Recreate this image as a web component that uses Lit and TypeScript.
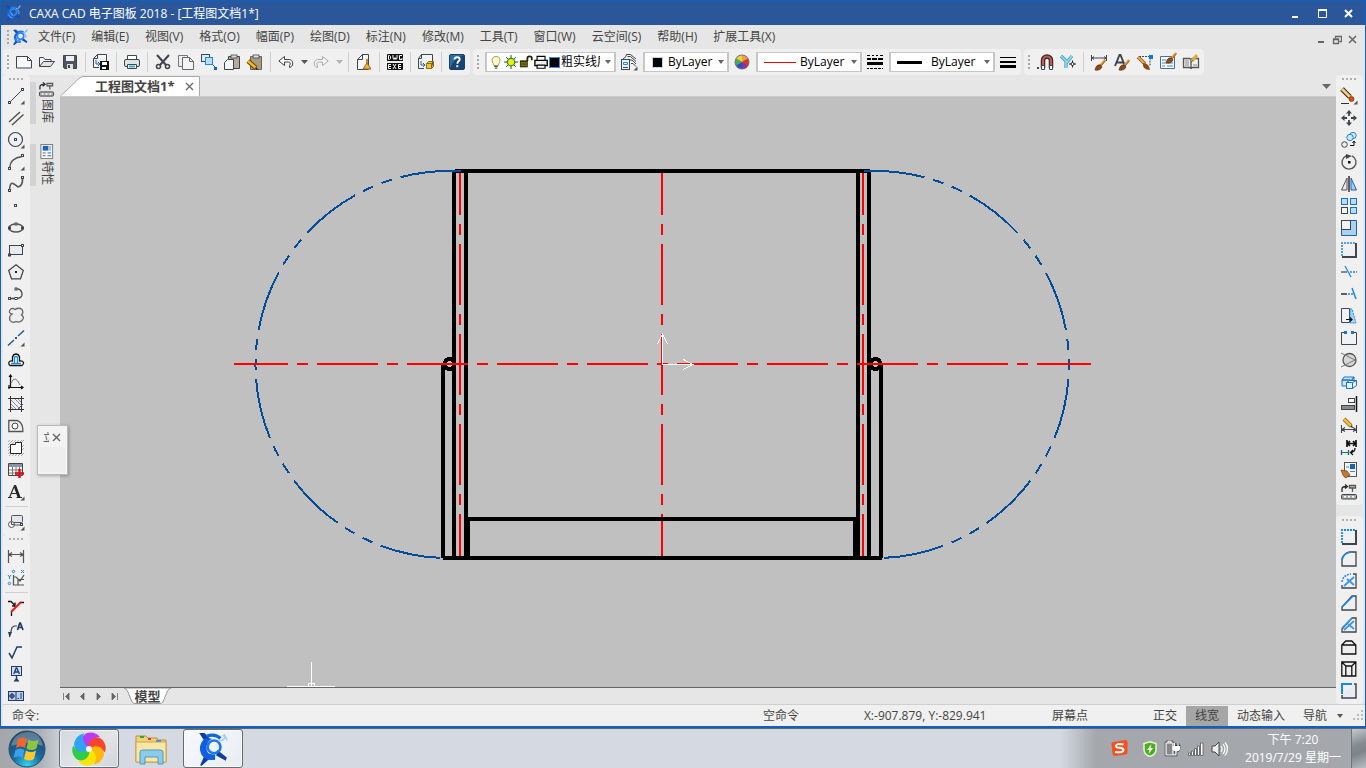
import { LitElement, html, svg, css } from "lit";
import { customElement, property } from "lit/decorators.js";

const D = "#3f454d";
const B = "#1e86e4";
const N = "#1f3a68";

/* small square handle centred on a point */
const h = (x: number, y: number) =>
  svg`<rect x=${x - 1} y=${y - 1} width="2" height="2" fill="#fff" stroke=${D}/>`;
const more = svg`<path d="M16.5 12.500v4h-4z" fill="#555"/>`;
const brush = (x: number, y: number) => svg`<g transform=${`translate(${x} ${y})`}>
  <path d="M10 0 5 6" stroke="#e89a3c" stroke-width="2.400"/><path d="M10.500.500 7 5" stroke="#6b4a20" stroke-width=".8"/>
  <path d="M6 5Q1 4 0 10q5 1 7-3z" fill="#8a4a1c" stroke="#5a2d0c" stroke-width=".6"/></g>`;
const edgeBox = svg`<rect x="1" y="1" width="14" height="14" fill="#eef0f4"/><path d="M15 1v14H1" fill="none" stroke=${D} stroke-width="2"/>`;

const ICONS: Record<string, unknown> = {
  new: svg`<path d="M.5 2.500h11l4 4v7.500H.5z" fill="#f6f8fb" stroke=${D}/><path d="M11.500 2.500v4h4" fill="none" stroke=${D}/>`,
  open: svg`<path d="M.5 12.500v-9h4l1.500 2h6v2" fill="#f4f5f8" stroke=${D}/><path d="m.5 12.500 4-5h11l-4 5z" fill="#dfe3ea" stroke=${D}/>`,
  save: svg`<path d="M1.500 1.500h13v13h-12l-1-1z" fill="#4f565f" stroke=${D}/><rect x="4" y="2" width="8" height="5" fill="#eef1f5"/><rect x="5" y="10" width="6" height="5" fill="#dfe3e8"/><rect x="6" y="11" width="2" height="3" fill=${D}/>`,
  export: svg`<path d="M4.500.5h9v8M6 13.500H.5v-9l4-4v4h-4" fill="#f4f6fa" stroke=${D}/><path d="M3 6v4h4M5 8l2 2-2 2" stroke="#1b62b0" fill="none"/><rect x="7" y="7" width="9" height="9" fill="#111"/><rect x="9" y="8" width="5" height="3" fill="#fff"/><rect x="9" y="13" width="4" height="2" fill="#fff"/>`,
  print: svg`<path d="M3.500 6V1.500h9V6" fill="#fff" stroke=${D}/><rect x=".5" y="5.500" width="15" height="7" rx="1.500" fill="#dfe2e6" stroke=${D}/><path d="M3.500 10.500h9v4h-9z" fill="#fff" stroke=${D}/><path d="M5 12.500h6" stroke="#2ab0d8" stroke-width="2"/>`,
  cut: svg`<path d="m2 1 9 10M14 1 5 11" stroke=${D} stroke-width="2"/><circle cx="3.500" cy="12.500" r="2" fill="none" stroke=${D} stroke-width="1.600"/><circle cx="12.500" cy="12.500" r="2" fill="none" stroke=${D} stroke-width="1.600"/>`,
  copy: svg`<path d="M4 12.500H.5V1.500h9v2" fill="#eee" stroke="#777"/><path d="M4.500 3.500h7l4 4v8h-11z" fill="#f2f3f5" stroke="#666"/><path d="M11.500 3.500v4h4" fill="none" stroke="#666"/>`,
  copyBase: svg`<rect x=".5" y=".5" width="8" height="7" fill="#dceafa" stroke=${D}/><rect x="4.500" y="3.500" width="7" height="7" fill="#b9dcfa" stroke=${B}/><path d="m11 10 3 3" stroke="#1b62b0"/><rect x="13" y="13" width="3" height="3" fill="#1463b8"/>`,
  paste: svg`<path d="M4.500 2.500h11v12h-11z" fill="#b7ab97" stroke=${D}/><rect x="7" y="1" width="6" height="3" fill="#d9d9d9" stroke=${D} stroke-width=".8"/><path d="M3.500 5.500h6v10h-9v-7z" fill="#f4f5f7" stroke=${D}/>`,
  pasteEdit: svg`<path d="M3.500 2.500h11v13h-11z" fill="#a89c86" stroke="#6b6250"/><rect x="6" y="1" width="6" height="3" fill="#ddd" stroke=${D} stroke-width=".8"/><path d="m1 7 8 7" stroke="#5a4208" stroke-width="4.500"/><path d="m1 7 8 7" stroke="#f8b81d" stroke-width="2.600"/><path d="m8.500 13.500 2 2" stroke="#222" stroke-width="1.500"/>`,
  undo: svg`<path d="M6.500 2.500v3h5q4 1 3 5.500-.500 2-3 2.500v-2q2-3-1-3.500h-4v3.500L.8 7z" fill="#fafafa" stroke=${D}/>`,
  redo: svg`<path d="M9.500 2.500v3h-5q-4 1-3 5.500.500 2 3 2.500v-2q-2-3 1-3.500h4v3.500L15.200 7z" fill="#f6f6f6" stroke="#aaa"/>`,
  clean: svg`<path d="M1.500 15.500v-10l5-5h6v15z" fill="#f4f6fa" stroke=${D}/><path d="M6.500.5v5h-5" fill="none" stroke=${D}/><path d="M11 5v4" stroke="#c8852a" stroke-width="2"/><path d="m11 9 4 6H7z" fill="#f2b632" stroke="#9a641b"/>`,
  dwg: svg`<rect y="0" width="16" height="16" rx="1" fill="#111"/><path d="M0 8h16" stroke="#eee" stroke-width="2"/><path d="M1.500 1.500v4h1l1-1v-2l-1-1zM6 1v3l1 1.500 1-2 1 2L10 4V1M15 1.500h-2.500v4H15V4M4 10.500H1.500v4H4M1.500 12.500H4M6 10l3 5M9 10l-3 5M14 10.500h-2.500v4H14M11.500 12.500H14" fill="none" stroke="#fff"/>`,
  block: svg`<path d="M3.500.5h11v13M6 14.500H.5v-10l3-4v4h-3" fill="#f4f6fa" stroke=${D}/><path d="M3 7v4h4M5 9l2 2-2 2" stroke="#1b62b0" fill="none"/><path d="M8.500 9.500h5v5h-5zM8.500 9.500l2-2h5l-2 2M13.500 14.500l2-2v-5" fill="#f2c230" stroke="#8a6a12"/>`,
  help: svg`<rect x=".5" y=".5" width="15" height="15" rx="1.500" fill="#2a6ca8" stroke="#1b3f66"/><path d="M1 15Q4 4 15 1v14z" fill="#174472"/><path d="M5.500 5.500q.3-2.300 2.700-2.300 2.500 0 2.500 2.100 0 1.400-1.300 2.100-1 .6-1 2.300" fill="none" stroke="#fff" stroke-width="1.900"/><rect x="7.300" y="11.200" width="2" height="2" fill="#fff"/>`,
  layers: svg`<path d="M2 5 5 2.500 5.500.5H9.500L15 5M6.500 2.500h3l5.500 5M9 6h2l4 4M10 9.500h2l3 3" fill="none" stroke=${D}/><rect x=".5" y="5.500" width="8" height="10" fill="#eef4fb" stroke=${D}/><path d="M2.500 8.500h4v2h-4z" fill="none" stroke=${B}/><path d="M2 13.500h5" stroke=${D}/>${more}`,
  wheel: svg`<circle cx="8" cy="8" r="7.500" fill="#777"/><path d="M8 8V1.500A6.500 6.500 0 0 1 13.600 4.800z" fill="#f0a040"/><path d="M8 8 2.400 4.800A6.500 6.500 0 0 1 8 1.500z" fill="#e8d040"/><path d="M8 8 13.600 4.800A6.500 6.500 0 0 1 13.600 11.200z" fill="#e03030"/><path d="M8 8 13.600 11.200A6.500 6.500 0 0 1 8 14.500z" fill="#8a30a0"/><path d="M8 8v6.500A6.500 6.500 0 0 1 2.400 11.200z" fill="#2a50c8"/><path d="M8 8 2.400 11.200A6.500 6.500 0 0 1 2.400 4.800z" fill="#40b050"/>`,
  ltype: svg`<path d="M0 1.500h3m2 0h2m2 0h2m2 0h3" stroke="#000"/><path d="M0 5h4m1 0h5m1 0h5" stroke="#000" stroke-width="2"/><path d="M0 9.500h16" stroke="#000" stroke-width="3"/><path d="M0 14.500h2m1 0h3m1 0h3m1 0h3m1 0h1" stroke="#000"/>`,
  lweight: svg`<path d="M0 3.500h16" stroke="#000"/><path d="M0 8h16" stroke="#000" stroke-width="2"/><path d="M0 12.500h16" stroke="#000" stroke-width="3"/>`,
  magnet: svg`<path d="M6 14V6.500a4 4 0 0 1 8 0V14" fill="none" stroke="#4a1c1c" stroke-width="4.500"/><path d="M6 11V6.500a4 4 0 0 1 8 0V11" fill="none" stroke="#b06460" stroke-width="2.200"/><path d="M4.500 11.500h3v4h-3zM12.500 11.500h3v4h-3z" fill="#f3f3f3" stroke=${D}/><rect x="0" y="13" width="2" height="2" fill=${D}/>`,
  snapY: svg`<path d="m1 2 6 6 5-6M6 7v7" fill="none" stroke="#4aa6cc" stroke-width="3.400"/><path d="m1 2 6 6 5-6M6 7v7" fill="none" stroke="#9bd8ee" stroke-width="1.500"/><path d="M9 10h7M12.500 6.500v7" stroke="#222"/><circle cx="12.500" cy="10" r="1.500" fill="#fff" stroke="#222"/>`,
  dimBrush: svg`<path d="M.5 1v6M15.500 1v6M1 4h14M3 2.500 1 4l2 1.500M13 2.500 15 4l-2 1.500" stroke=${D} fill="none"/>${brush(4, 6)}`,
  textBrush: svg`<path d="m1 12 4.500-11h1L11 12M3 8.500h6" fill="none" stroke=${D} stroke-width="1.900"/>${brush(5, 6)}`,
  lineBrush: svg`<path d="M2 2.500h11v10" stroke=${D} fill="none" stroke-dasharray="2 1"/><rect x="12" y="1" width="4" height="4" fill="#0a78e0"/><path d="m1 3 7 7" stroke="#6b4a20" stroke-width="3.400"/><path d="m1 3 7 7" stroke="#f0a84c" stroke-width="2.200"/><path d="M6 9q6 0 7 7-8 0-7-7z" fill="#8a4a1c"/>`,
  tblBrush: svg`<path d="M.5 2.500h14v12H.5z" fill="#f5f8fc" stroke="#4a7098"/><path d="M2 6h4M2 9h5M2 12h3M8 9h5M7 12h6" stroke="#4a88c8"/>${brush(6, -1)}`,
  bookBrush: svg`<path d="M.5 4.500h6l1.500 1 1.500-1h6v9h-6l-1.500 1-1.500-1h-6zM8 5.500v9" fill="#eee" stroke="#555" stroke-width="1.300"/><path d="M2 7h4M2 9h4M2 11h4M10 11h4" stroke="#888"/><path d="m14 1-5 6" stroke="#e0a83c" stroke-width="3"/><path d="m8 8.500 1.500-2" stroke="#555"/>`,

  line: svg`<path d="M2 14 14 2" stroke=${D}/>${h(1.5, 14.5)}${h(14.5, 1.5)}${more}`,
  parallel: svg`<path d="M1 12 12 2M4 15 15.500 4.500" stroke="#44503f" stroke-width="1.300"/>`,
  circle: svg`<circle cx="7.500" cy="7.500" r="7" fill="#eef1f5" stroke=${D} stroke-width="1.200"/>${h(7.5, 7.5)}${more}`,
  arc: svg`<path d="M1.500 14Q2.500 4 14 2.500" fill="none" stroke="#555" stroke-width="1.400"/>${h(1.5, 14.5)}${h(14.5, 1.5)}${more}`,
  spline: svg`<path d="M1.500 14Q2 6 5 7.500T10 11q5-1 4.500-9" fill="none" stroke="#555" stroke-width="1.600"/>${h(1.5, 14.5)}${h(14.5, 1.5)}`,
  point: svg`${h(7.5, 7.5)}`,
  ellipse: svg`<ellipse cx="8" cy="8" rx="7" ry="4" fill="#eceef2" stroke="#555" stroke-width="1.500"/>${h(1.5, 8)}${h(14.5, 8)}${h(8, 4)}`,
  rect: svg`<rect x="1.500" y="3.500" width="13" height="9" fill="#e8ebf2" stroke=${D}/>${h(1.5, 13)}${h(14.5, 3.5)}`,
  pentagon: svg`<path d="m8 .8 7.300 5.700-2.800 8.300h-9L.7 6.500z" fill="#eceef4" stroke="#444" stroke-width="1.200"/><rect x="7" y="7" width="2" height="2" fill="#222"/>`,
  pline: svg`<path d="M2 12.500h7q6-1 5-5-1-5-6-4.500" fill="none" stroke="#444" stroke-width="1.300"/>${h(1.5, 12.5)}${h(8, 12.5)}${h(8, 3)}`,
  cloud: svg`<path d="M4 6Q0 5 2 2t5-.5q4-2.500 7 0 2 3-.5 5.500Q17 9 14 12.500q-3 2.500-6 1-4 2-6-1-1.500-4 2-6.500z" fill="#eceef2" stroke="#666" stroke-width="1.300"/>`,
  cline: svg`<path d="M0 15.500 6 10M10 6l6-5.500" stroke="#215a94" stroke-width="1.500"/><rect x="7" y="7" width="2" height="2" fill="#1d5796"/>${more}`,
  offset: svg`<path d="M2 13.500h12q2-1 1.500-3-1-2-4-1.500V5q-1-3-3.500-3T4.500 5v4Q1 8.500.8 11q0 2 1.200 2.500z" fill="#fff" stroke="#111" stroke-width="1.300"/><path d="M3 11.500h10M3 11.500h3.500V5.500q1.500-2 3 0v6" fill="none" stroke=${B} stroke-width="1.300"/>`,
  func: svg`<path d="M2.500 1v13M0 13.500h15M1 3l1.500-2L4 3M1 11v4M13 12l2 1.500L13 15" fill="none" stroke="#111" stroke-width="1.200"/><path d="M3 9q4-9 9 2" fill="none" stroke="#777"/>`,
  hatch: svg`<path d="M2.500 0v16M13.500 0v16M0 2.500h16M0 13.500h16" stroke="#333"/><path d="m3 4 9 9M3 8l5 5M7 3l6 6M3 11l2 2M10 3l3 3" stroke="#8a8ab0"/><path d="m9 14 6-6" stroke="#555"/>`,
  region: svg`<path d="M.8 2.500h8q5 1 6 8v3h-14z" fill="#eef0f4" stroke="#555" stroke-width="1.300"/><circle cx="7" cy="8" r="3" fill="#fff" stroke=${D}/>`,
  fill: svg`<path d="m0 2 2-2M0 5l5-5M0 8l8-8M0 11 11 0M0 14 14 0M1 16l3-3M4 16l2-2M7 16l2-2M10 16l3-3M13 16l3-3M12 4l4-4M13 8l3-3M13 11l3-3" stroke="#aaa"/><path d="M2.500 4.500h5v-2h6v11h-11z" fill="#fff" stroke="#222"/>`,
  table: svg`<path d="M.5 1.500h14v12H.5z" fill="#fff" stroke="#444"/><rect x="1" y="2" width="13" height="3" fill="#8a93a5"/><path d="M1 8h13M1 11h13M4.500 5v8M8 5v8M11.500 5v8" stroke="#777"/><path d="M11.500 7v9M7 11.500h9" stroke="#d8101c" stroke-width="2.400"/>`,
  text: svg`<path d="m1.500 13.500 5-12h1l4.500 12M0 13.500h4M8.500 13.500H14M3.500 9.500h6" fill="none" stroke="#2a2a2a" stroke-width="1.200"/><path d="m7 2.500 4 11" stroke="#222" stroke-width="2.400"/>${more}`,
  insert: svg`<rect x="3.500" y="1.500" width="11" height="7" rx="1" fill="#e3e6ec" stroke="#555"/><circle cx="3.500" cy="10.500" r="3" fill="#f5f5f5" stroke="#555"/><path d="M3.500 8v2.500H6M6 11h8" stroke="#555" fill="none"/>${h(13.5, 10.5)}${more}`,
  dim: svg`<path d="M.5 2v13M15.500 2v13M1 6.500h14M4 4.500l-3 2 3 2M12 4.500l3 2-3 2" fill="none" stroke="#555" stroke-width="1.200"/>`,
  coord: svg`<path d="M5.500 5v10H16M5 7h3l4 4 4-6M10 15V9.500h6" fill="none" stroke="#555" stroke-width="1.200"/><path d="m13 0 3 3M16 0l-3 3M0 5l1.500 2L3 5M1.500 7v2" stroke=${B} fill="none"/><circle cx="5.500" cy="1.500" r="1.200" fill="none" stroke=${B}/><circle cx="1.500" cy="13.500" r="1.200" fill="none" stroke=${B}/>`,
  chamferDim: svg`<path d="M0 1.500h3l4 4M7 2.500v3.500H4M12 2.500h4M3.500 12v4" fill="none" stroke="#111" stroke-width="1.300"/><path d="M13 2 3 12" stroke="#f01414" stroke-width="2"/>`,
  leader: svg`<path d="M1.500 15 4 5.500 6 4h3" fill="none" stroke=${D} stroke-width="1.200"/><path d="M0 10h4l-2.500 5z" fill=${N}/><path d="m9.500 8 2.300-7h.6L15 8M10.500 5.500h3.500" fill="none" stroke=${N} stroke-width="1.700"/>`,
  rough: svg`<path d="m1 9 3 5 5-11h5" fill="none" stroke=${N} stroke-width="1.500"/>`,
  datum: svg`<rect x="3.500" y=".5" width="10" height="9" fill="#cfe0f4" stroke=${N}/><path d="m5.800 8 2.400-6h.6L11.500 8M6.600 6h4M8.500 10v3" fill="none" stroke=${N} stroke-width="1.300"/><path d="m8.500 11.500 3 4h-6z" fill=${N}/>`,
  tol: svg`<rect x=".5" y="3.500" width="15" height="9" fill="#b9cfe8" stroke=${N}/><circle cx="4" cy="8" r="2" fill="none" stroke=${N}/><path d="M1 8h6M4 5v6M8 4v8M13 5v6M9.500 10.500H11" stroke=${N}/>`,

  erase: svg`<path d="m1 1 8 8" stroke="#3a2a10" stroke-width="5"/><path d="m1 1 8 8" stroke="#e8cc90" stroke-width="3"/><path d="m1 3 7 7" stroke="#a07428"/><circle cx="10.500" cy="11" r="2.500" fill="#d8501c" stroke="#7a2a0c" stroke-width=".7"/><path d="M0 15.500h8" stroke="#333"/>${more}`,
  move: svg`<path d="M8 2v4M8 10v4M2 8h4M10 8h4" stroke=${D} stroke-width="1.800"/><path d="M8 0l3 3.500H5zM8 16l3-3.500H5zM0 8l3.500-3v6zM16 8l-3.500-3v6z" fill=${D}/>`,
  copyTo: svg`<circle cx="3.500" cy="12.500" r="2.800" fill="#eee" stroke=${D}/><circle cx="12" cy="3.500" r="3.200" fill="#d5e8fa" stroke=${B}/><circle cx="9" cy="5.500" r="3.200" fill="#d5e8fa" stroke=${B}/><path d="M9 13.500h4v-4M11.500 11l1.500-2 1.500 2" fill="none" stroke="#111"/>`,
  rotate: svg`<path d="M5 1.800A7 7 0 1 0 11 1.800" fill="none" stroke="#555" stroke-width="1.400"/><path d="m5 0 6 2-6 3z" fill="#444"/><rect x="7" y="7" width="2.500" height="2.500" fill="#111"/>`,
  mirror: svg`<path d="M6 2v12H.5z" fill="#e6e9ee" stroke="#555"/><path d="M8 0v16" stroke="#111" stroke-width="1.300"/><path d="M10 2v12h5.500z" fill="#9fd0f5" stroke="#1b62b0"/>`,
  array: svg`<rect x=".5" y=".5" width="6" height="6" fill="#b9dcf8" stroke="#1b72c4"/><rect x="9.500" y=".5" width="6" height="6" fill="#b9dcf8" stroke="#1b72c4"/><rect x=".5" y="9.500" width="6" height="6" fill="#f3f3f3" stroke=${D}/><rect x="9.500" y="9.500" width="6" height="6" fill="#b9dcf8" stroke="#1b72c4"/>`,
  scale: svg`<path d="M.5.5h15v15H.5z" fill="#a9d2f2" stroke="#1b62b0"/><rect x=".5" y=".5" width="9" height="9" fill="#f0f2f5" stroke=${D}/>`,
  stretch: svg`${edgeBox}<path d="M1 14V1h13" fill="none" stroke=${B} stroke-dasharray="2 1" stroke-width="1.500"/>`,
  trim: svg`<path d="M0 8h6" stroke=${D} stroke-width="1.200"/><path d="m4 2 6 11" stroke=${B} stroke-width="1.300"/><path d="M9 8h7" stroke=${B} stroke-dasharray="2 1" stroke-width="1.300"/>`,
  extend: svg`<path d="M0 8h6" stroke="#111" stroke-width="1.300"/><path d="M7 8h5" stroke=${B} stroke-dasharray="2 1" stroke-width="1.300"/><path d="m11 2 4 11" stroke=${B} stroke-width="1.500"/>`,
  stretchTo: svg`<path d="M.5.5h8v14h-8z" fill="#f0f2f5" stroke=${D}/><path d="M9 1h2l4 14H9z" fill="#a9d2f2" stroke=${B} stroke-dasharray="2 1"/><path d="M5 11.500h6M9 9.500l2 2-2 2" stroke="#111" stroke-width="1.200" fill="none"/>`,
  breakAt: svg`<path d="M4 2.500H.5v12h15v-12H12" fill="#eef1f5" stroke=${D}/><rect x="3" y="1" width="3" height="3" fill="#1b72c4"/><rect x="10" y="1" width="3" height="3" fill="#1b72c4"/>`,
  zoomPart: svg`<circle cx="8.500" cy="8" r="6.500" fill="#d8d8d8" stroke="#555" stroke-width="1.300"/><path d="M0 1l14 7L0 15" fill="none" stroke="#777"/>`,
  blocks: svg`<path d="M3 3h10l-2 3H1zM1 6h8v6H1zM11 6l2-3v6l-2 3" fill="#cfe6fa" stroke="#1b72c4"/><path d="M5.500 8.500h6v6h-6zM5.500 8.500l3-2h7v5l-4 3M11.500 8.500l4-2" fill="#e4f2fd" stroke="#1b72c4"/>`,
  align: svg`<path d="M15.500 0v16" stroke="#111" stroke-width="1.500"/><rect x="7.500" y="2.500" width="6" height="4" fill="#fff" stroke=${D}/><rect x=".5" y="9.500" width="13" height="4" fill="#8a8a8a" stroke=${D}/>`,
  dimEdit: svg`<path d="M.5 7v8M15.500 7v8M1 11.500h14M4 9.500l-3 2 3 2M12 9.500l3 2-3 2" fill="none" stroke=${D} stroke-width="1.100"/><path d="m3 1 7 7" stroke="#8a5a10" stroke-width="4"/><path d="m3 1 7 7" stroke="#f4bc44" stroke-width="2.600"/><path d="m9 9 3 1-1-3" fill="#333"/>`,
  dimMatch: svg`<path d="M6 0v7M15 0v7M6 3.500h9M9 1 6.500 3.500 9 6M12 1l2.500 2.500L12 6" fill="none" stroke="#111" stroke-width="1.700"/><path d="M.5 10v5M7.500 10v5" stroke="#1e50c8" stroke-width="1.300"/><path d="M1 12.500h7" stroke="#1a8a3a"/><path d="M14 8q0 4-4 4.500M12 10l-2.500 2.500L12 15" stroke="#111" fill="none" stroke-width="1.300"/>`,
  props: svg`<rect x="3.500" y=".5" width="12" height="14" fill="#f2f5f9" stroke="#555"/><rect x="9" y="2" width="5" height="5" fill="#1b62b0"/><path d="M9 9.500h5M5 5h3" stroke="#4a88c8"/><path d="m0 8 6 1 3 4-4 3q-2-1-3-3z" fill="#c27a34" stroke="#6b3a10" stroke-width=".7"/>`,
  sheet: svg`<rect x="2" y=".5" width="12.500" height="15" fill="#f4f7fa" stroke="#777"/><rect x="4" y="2" width="6" height="5" fill="#1b62b0"/><rect x="10" y="2" width="3" height="5" fill="#9cc2ea"/><path d="M4 9.500h3m2 0h4M4 12.500h3m2 0h4" stroke="#4a6078"/>`,
  lib: svg`<path d="M1 8V5q0-2.500 4-2.500M4 .5l2.500 2L4 4.500" fill="none" stroke="#222" stroke-width="1.300"/><path d="M8.500 1.500h6v2.500h-6zM11.500 4v4" fill="#ccc" stroke="#555" stroke-width="1.300"/><rect x=".5" y="10.500" width="15" height="4.500" rx="1" fill="#aaa" stroke=${D}/><path d="M3 12.700h2m2 0h2m2 0h2" stroke="#fff" stroke-width="1.500"/>`,

  cornerA: svg`${edgeBox}<path d="M1 14V1h13" fill="none" stroke=${B} stroke-dasharray="2 1" stroke-width="1.800"/>`,
  fillet: svg`<path d="M1 15V8Q3 2 9 1h6v14z" fill="#eef0f4" stroke=${D} stroke-width="1.300"/><path d="M1 9Q2 2 10 1" fill="none" stroke=${B} stroke-width="1.600"/>`,
  filletM: svg`<path d="M1 12v3h14V1h-3" fill="#eef0f4" stroke=${D} stroke-width="1.300"/><path d="M1 9Q2 2 10 1" fill="none" stroke=${B} stroke-dasharray="2 1" stroke-width="1.500"/><path d="m3 13 10-9M6 6l7 6" stroke="#3a96e8" stroke-width="1.800"/>`,
  chamfer: svg`<path d="M1 12v3h14V1h-4z" fill="#eef0f4" stroke=${D} stroke-width="1.300"/><path d="M1 12 12 1" stroke=${B} stroke-width="1.700"/>`,
  chamferM: svg`<path d="M1 12v3h14V1h-4z" fill="#eef0f4" stroke=${D} stroke-width="1.300"/><path d="M1 11 11 1M3 13l10-9M7 7l6 5" stroke="#3a96e8" stroke-width="1.700"/>`,
  outer: svg`<path d="M.8 6v9h14V6l-4-4h-6zM.8 6h14" fill="#eee" stroke="#111" stroke-width="1.300"/>`,
  inner: svg`<path d="M.8 1h14v14H.8zM.8 1l4 4v10M14.800 1l-4 4v10M4.800 5h6" fill="#eee" stroke="#111" stroke-width="1.300"/>`,
  sharp: svg`<path d="M1 12v3h14V1h-2" fill="#e8ecf2" stroke=${D} stroke-width="1.500"/><path d="M1 11V1h10" fill="none" stroke=${B} stroke-width="2"/>`,

  bulb: svg`<path d="M5.500 12Q5.500 10 4 8.500 2.500 4 5 2.500 8 .5 11 2.500 13.500 4 12 8.500 10.500 10 10.500 12z" fill="#fdfbd0" stroke="#9a9640"/><path d="M6 13h4M6.500 15h3" stroke="#555" stroke-width="1.400"/>`,
  sun: svg`<path d="M8 0v16M0 8h16M2.500 2.500l11 11M13.500 2.500l-11 11" stroke="#222"/><circle cx="8" cy="8" r="4.200" fill="#f4f000" stroke="#1a9a2a" stroke-width="1.400"/>`,
  lock: svg`<rect x="1" y="6" width="9" height="8" fill="#3c3808"/><path d="M2 9h7M2 11.500h7" stroke="#a09820"/><path d="M9.500 7V3.500q0-2 2.500-2t2.500 2V6" fill="none" stroke="#222008" stroke-width="2"/>`,
  printB: svg`<path d="M3.500 6V1.500h9V6" fill="#fff" stroke="#000" stroke-width="1.300"/><path d="M1 6h14v6H1z" fill="#eee" stroke="#000" stroke-width="1.500"/><path d="M3.500 11.500h9v3.500h-9z" fill="#fff" stroke="#000" stroke-width="1.300"/>`,
};

const icon = (name: string) =>
  html`<svg class="ico" viewBox="0 0 17 17" aria-hidden="true" fill="none">${ICONS[name]}</svg>`;

const logo = html`<svg class="logo" viewBox="0 0 32 32" aria-hidden="true">
  <path d="m2 2 6-1 6 6-4 4zM21 17l10 8-2 3-10-6zM8 22l5 3-8 7-3-1z" fill="#0b4fc0"/>
  <path d="M9 7Q1 14 5 22q5 8 13 5l-1-4q-7 1-8-5-1-6 6-10z" fill="#1266dc"/>
  <path d="M10 5q9-4 15 1l-4 1q-5-2-9 1z" fill="#1f7cf0"/>
  <circle cx="17" cy="14" r="6.500" fill="none" stroke="#2b86ee" stroke-width="3.500"/>
  <path d="M26 5q5-1 4-4-1 8-8 6M25 9q4 3 3 9" fill="none" stroke="#6ab6fa" stroke-width="2"/>
  <path d="m12 15 3 4M7 19q2 6 8 7" fill="none" stroke="#7cc4ff" stroke-width="1.500"/></svg>`;

const bigLogo = html`<svg width="34" height="34" viewBox="0 0 32 32" aria-hidden="true">
  <path d="m3 1 5 0 5 5-4 4zM20 17l9 7-1 3-9-5zM8 22l5 3-8 7-1-1z" fill="#0b3fa0"/>
  <path d="M8 6Q1 13 5 21q4 7 13 5v-5q-8 1-8-5-1-6 5-10z" fill="#0f5fe0"/>
  <circle cx="17" cy="14" r="6" fill="none" stroke="#1d78ea" stroke-width="2.500"/>
  <path d="M25 3q4 1 4 5M27 2q1 7-6 6" fill="none" stroke="#a4cdf6" stroke-width="1.500"/>
  <path d="M10 4q8-3 13 2" fill="none" stroke="#1266dc" stroke-width="3"/></svg>`;

type Item = [string, string] | "|";
const FILE_TOOLS: (Item | "v" | "vd")[] = [
  ["new", "新建"], ["open", "打开"], ["save", "保存"], "|", ["export", "另存"], "|", ["print", "打印"], "|",
  ["cut", "剪切"], ["copy", "复制"], ["copyBase", "带基点复制"], ["paste", "粘贴"], ["pasteEdit", "选择性粘贴"], "|",
  ["undo", "撤销"], "v", ["redo", "重做"], "vd", "|", ["clean", "清理"], "|", ["dwg", "DWG 转换器"], "|",
  ["block", "块"], "|", ["help", "帮助"],
];
const STYLE_TOOLS: Item[] = [
  ["magnet", "捕捉"], ["snapY", "捕捉设置"], "|", ["dimBrush", "标注样式"], ["textBrush", "文字样式"],
  ["lineBrush", "引线样式"], ["tblBrush", "表格样式"], ["bookBrush", "样式管理"],
];
const DRAW: Item[] = [
  ["line", "直线"], ["parallel", "平行线"], ["circle", "圆"], ["arc", "圆弧"], ["spline", "样条"], ["point", "点"],
  ["ellipse", "椭圆"], ["rect", "矩形"], ["pentagon", "正多边形"], ["pline", "多段线"], ["cloud", "云线"],
  ["cline", "中心线"], ["offset", "等距线"], ["func", "公式曲线"], ["hatch", "剖面线"], ["region", "局部放大"],
  ["fill", "填充"], ["table", "表格"], ["text", "文字"], "|", ["insert", "块插入"],
];
const ANNOT: Item[] = [
  ["dim", "尺寸标注"], ["coord", "坐标标注"], "|", ["chamferDim", "倒角标注"], ["leader", "引出说明"],
  ["rough", "粗糙度"], ["datum", "基准代号"], ["tol", "形位公差"],
];
const MODIFY: Item[] = [
  ["erase", "删除"], ["move", "平移"], ["copyTo", "平移复制"], ["rotate", "旋转"], ["mirror", "镜像"],
  ["array", "阵列"], ["scale", "缩放"], ["stretch", "拉伸"], ["trim", "裁剪"], ["extend", "延伸"],
  ["stretchTo", "拉伸到"], ["breakAt", "打断"], ["zoomPart", "局部"], ["blocks", "分解"], ["align", "对齐"],
  ["dimEdit", "标注编辑"], ["dimMatch", "标注匹配"], ["props", "特性匹配"], ["lib", "图库"],
];
const CORNER: Item[] = [
  ["cornerA", "多圆角"], ["fillet", "圆角"], ["filletM", "多圆角"], ["chamfer", "倒角"], ["chamferM", "多倒角"],
  ["outer", "外倒角"], ["inner", "内倒角"], ["sharp", "尖角"],
];
const MENUS = ["文件(F)", "编辑(E)", "视图(V)", "格式(O)", "幅面(P)", "绘图(D)", "标注(N)", "修改(M)", "工具(T)",
  "窗口(W)", "云空间(S)", "帮助(H)", "扩展工具(X)"];

const tool = (it: Item | "v" | "vd") =>
  it === "|" ? html`<span class="sep"></span>`
  : it === "v" || it === "vd"
    ? html`<button class="drop ${it}" aria-label="更多"><svg width="7" height="4" viewBox="0 0 7 4"><path d="M0 0h7L3.500 4z" fill="currentColor"/></svg></button>`
    : html`<button class="tool" aria-label=${it[1]}>${icon(it[0])}</button>`;

const base = css`
  * { box-sizing: border-box; }
  button { border: 0; padding: 0; background: none; font: inherit; color: inherit; display: grid; place-items: center; }
  svg { display: block; }
  .ico { width: 17px; height: 17px; overflow: visible; }
  .tool { width: 23px; height: 22px; }
  .panel { background: #f0f0f0; border-radius: 4px; }
`;

@customElement("tool-rail")
class ToolRail extends LitElement {
  @property({ attribute: false }) items: Item[] = [];
  static styles = [base, css`
    :host { display: block; background: #f0f0f0; border-radius: 4px; padding-bottom: 2px; }
    .grip { height: 2px; width: 15px; margin: 3px 0 5px 6px;
      background: repeating-linear-gradient(90deg, #b0b0b0 0 2px, transparent 2px 4px); }
    .tool { width: 27px; }
    .sep { display: block; height: 1px; margin: 3px 2px 4px; background: #cfcfcf; }
  `];
  render() {
    return html`<div class="grip"></div>${this.items.map(tool)}`;
  }
}

@customElement("cad-drawing")
class CadDrawing extends LitElement {
  static styles = css`
    :host { display: block; min-height: 0; background: #c0c0c0; overflow: hidden; }
    svg { display: block; width: 100%; height: 100%; }
    .k { stroke: #000; stroke-width: 4; }
    .r { stroke: #f00; stroke-width: 2; stroke-dasharray: 61 9 11 9; }
    .b { stroke: #004c99; stroke-width: 2; stroke-dasharray: 61 9 11 9 11 9; }
    .w { stroke: #fff; stroke-width: 1; }
  `;
  render() {
    return html`<svg viewBox="60 97 1276 590" fill="none" shape-rendering="crispEdges" role="img" aria-label="图形">
      <path class="r" stroke-dashoffset="19" d="M662 173V556"/>
      <path class="k" d="M455 171H870M454 170V558M466 170V558M858 170V558M869 170V558M443 363V558M881 363V558M443 558H882M468 519H857M468 519V558M855 519V558"/>
      <circle cx="449.500" cy="364" r="5" stroke="#000" stroke-width="4"/>
      <circle cx="875.500" cy="364" r="5" stroke="#000" stroke-width="4"/>
      <path class="r" stroke-dashoffset="19" d="M460 173V556"/><path class="r" stroke-dashoffset="19" d="M863 173V556"/>
      <path class="b" d="M461 171H449A193.500 193.500 0 0 0 255.500 364.500A193.500 193.500 0 0 0 443 558"/>
      <path class="b" d="M864 171H875.500A193.500 193.500 0 0 1 1069 364.500A193.500 193.500 0 0 1 881 558"/>
      <path class="r" stroke-dashoffset="7" d="M234 364H1091"/>
      <path class="w" d="M662.500 335V364.500H693M657.500 344 662.500 334.500 667.500 344M683.500 359.500 692.500 364.500 683.500 369.500"/>
      <path class="w" d="M311.500 662V686M287 686.500H335M308.500 687V683.500H314.500V687"/>
    </svg>`;
  }
}

@customElement("app-root")
class AppRoot extends LitElement {
  static styles = [base, css`
    :host { display: flex; flex-direction: column; height: 100vh; overflow: hidden; color: #444;
      font: 12px/16px "Open Sans", "Noto Sans CJK SC", sans-serif; cursor: default; }
    .window { flex: 1; min-height: 0; display: flex; flex-direction: column; background: #e6e6e6;
      border: 1px solid #1060c0; border-bottom-width: 2px; }
    .title { height: 24px; display: flex; align-items: center; background: #2b579a; color: #fff; padding-left: 4px; flex: none; }
    .title h1 { font: inherit; margin: 0; flex: 1; padding-top: 1px; }
    .logo { width: 16px; height: 16px; margin-right: 8px; }
    .winbtn { width: 26px; height: 24px; }
    .winbtns { display: flex; padding-right: 3px; }
    .menu { height: 24px; display: flex; align-items: center; padding-left: 6px; flex: none; }
    .menu .logo { margin: 0 2px 0 3px; }
    .menu button { padding: 0 8px; height: 22px; }
    .vgrip { width: 2px; height: 14px; background: repeating-linear-gradient(#a8a8a8 0 2px, transparent 2px 4px); }
    .mdi { margin-left: auto; display: flex; color: #666; padding: 6px 4px 0 0; }
    .menu .mdi button { width: 16px; height: 16px; padding: 0; }
    .bars { display: flex; gap: 3px; height: 26px; flex: none; padding-left: 2px; }
    .bars .panel { display: flex; align-items: center; padding: 0 1px 0 4px; }
    .bars .vgrip { margin-right: 4px; }
    .bars .sep { width: 1px; height: 20px; margin: 0 4px 0 3px; background: #cfcfcf; }
    .bars .layerbar { gap: 2px; }
    .drop { width: 12px; height: 22px; color: #555; }
    .vd { color: #b4b4b4; }
    .combo { display: flex; align-items: center; height: 20px; background: #fff; border: 2px solid #c6c6c6;
      border-width: 1px 2px; color: #000; }
    .combo select { appearance: none; border: 0; background: none; font: inherit; color: inherit; padding: 0;
      min-width: 0; flex: 1; overflow: hidden; white-space: nowrap; }
    .combo .car { margin: 0 3px; color: #666; }
    .c131 { width: 131px; padding-left: 2px; }
    .c131 .ico { width: 15px; height: 15px; flex: none; }
    .c131 select { text-overflow: clip; margin-right: 2px; }
    .c86 { width: 86px; padding-left: 8px; }
    .c106 { width: 106px; padding-left: 6px; }
    .sw { width: 9px; height: 9px; background: #000; outline: 1px solid #bcd6f2; flex: none; margin-right: 6px; }
    .sw.near { margin: 0 2px 0 1px; outline-color: #3a8ae0; }
    .red { width: 32px; height: 1px; background: #f00; margin-right: 4px; }
    .thick { width: 25px; height: 3px; background: #000; margin-right: 9px; }
    .work { flex: 1; min-height: 0; display: grid; grid-template-columns: 29px 30px minmax(0, 1fr) 29px; }
    .rails { display: flex; flex-direction: column; min-height: 0; overflow: hidden; padding-left: 2px; }
    .rails.right { gap: 11px; padding: 0 2px 0 0; }
    .dock { display: flex; flex-direction: column; gap: 20px; padding-top: 7px; }
    .dock button { display: flex; align-items: center; height: 42px; gap: 3px; }
    .dock .strip { width: 6px; height: 42px; background: #d3d3d3; }
    .dock .lab { display: flex; flex-direction: column; align-items: center; gap: 1px; }
    .dock .ico { width: 16px; height: 16px; }
    .dock .vt { writing-mode: vertical-rl; text-orientation: sideways; line-height: 14px; }
    .center { display: flex; flex-direction: column; min-width: 0; min-height: 0; }
    .tabs { height: 22px; display: flex; align-items: flex-end; justify-content: space-between; border-bottom: 1px solid #c9c9c9; flex: none; }
    .tab { position: relative; display: flex; align-items: center; height: 20px; width: 140px; padding-left: 35px; color: #444; }
    .tab .shape { position: absolute; inset: 0; width: 140px; height: 20px; }
    .tab span, .tab button { position: relative; }
    .tab span { font-size: 13px; font-weight: 700; white-space: nowrap; }
    .tab button { width: 10px; height: 16px; margin-left: auto; margin-right: 6px; }
    .list { width: 20px; height: 20px; color: #666; }
    cad-drawing { flex: 1; }
    .sheets { height: 17px; display: flex; border-top: 1px solid #666; flex: none; }
    .sheets .nav { width: 16px; height: 17px; color: #666; }
    .sheet { position: relative; width: 47px; height: 16px; font-size: 13px; font-weight: 700; }
    .sheet svg { position: absolute; inset: 0; }
    .sheet span { position: relative; }
    .status { height: 22px; display: flex; align-items: center; background: #f0f0f0; border-top: 1px solid #cfcfcf;
      margin-left: 2px; padding-left: 9px; white-space: nowrap; flex: none; }
    .status .cmd { flex: 1; }
    .w101 { width: 101px; }
    .w188 { width: 188px; }
    .w92 { width: 92px; }
    .status button { height: 20px; padding: 0 9px; }
    .status .on { background: #a6a6a6; }
    .status .nv { padding: 0 10px 0 9px; display: flex; align-items: center; gap: 10px; }
    .float { position: absolute; left: 37px; top: 425px; width: 31px; height: 50px; background: #f3f3f3;
      border: 1px solid #b9b9b9; box-shadow: 1px 1px 3px #0004; padding: 3px 2px 2px; display: flex; flex-direction: column; }
    .float .head { display: flex; align-items: center; justify-content: space-between; padding: 0 4px 0 3px; }
    .float .head span { width: 6px; height: 16px; overflow: hidden; white-space: nowrap; font-size: 10px; }
    .float .body { flex: 1; margin-top: 2px; background: #eee; }
    .taskbar { height: 40px; flex: none; display: flex; align-items: center; border-top: 1px solid #5d6772;
      background: linear-gradient(90deg, #a3a7ac 0, #acb1b6 40px, #d5dae2 66px, #d5dae2 calc(100% - 306px), #a4a8ad calc(100% - 270px), #a4a8ad); }
    .start { width: 54px; height: 39px; margin-right: 3px; }
    .task { width: 60px; height: 39px; margin-left: 2px; border-radius: 3px; }
    .task.run { border: 1px solid #666c74; background: linear-gradient(135deg, #d4d9df, #e2e4e6 60%, #cfd3d8); box-shadow: inset 0 0 0 1px #fff9; }
    .task.on { background: linear-gradient(135deg, #f6f9fc, #e9edf3); }
    .tray { margin-left: auto; display: flex; align-items: center; gap: 7px; }
    .tray .ime { margin-right: 8px; }
    .clock { color: #fff; text-align: center; line-height: 18px; margin: 0 5px 0 12px; padding-top: 1px; width: 106px; white-space: nowrap; }
    .desk { width: 15px; height: 39px; border-left: 1px solid #6e757d; background: linear-gradient(160deg, #c6cace, #858b91 40%, #7d8389 60%, #b9bec3); }
  `];

  render() {
    const car = html`<svg class="car" width="6" height="4" viewBox="0 0 6 4"><path d="M0 0h6L3 4z" fill="currentColor"/></svg>`;
    return html`
      <div class="window">
        <header class="title">${logo}<h1>CAXA CAD 电子图板 2018 - [工程图文档1*]</h1>
          <div class="winbtns">
            <button class="winbtn" aria-label="最小化"><svg width="12" height="12"><path d="M1 10h6" stroke="#fff" stroke-width="2"/></svg></button>
            <button class="winbtn" aria-label="最大化"><svg width="12" height="12"><path d="M1.500 3h8v7.500h-8z" fill="none" stroke="#fff"/><path d="M1 3h9" stroke="#fff" stroke-width="2"/></svg></button>
            <button class="winbtn" aria-label="关闭"><svg width="12" height="12"><path d="m2 3 7 7M9 3l-7 7" stroke="#fff" stroke-width="2"/></svg></button>
          </div>
        </header>
        <nav class="menu"><span class="vgrip"></span>${logo}
          ${MENUS.map((m) => html`<button>${m}</button>`)}
          <div class="mdi">
            <button aria-label="最小化"><svg width="10" height="10"><path d="M2 7h6" stroke="currentColor" stroke-width="2"/></svg></button>
            <button aria-label="还原"><svg width="10" height="10"><path d="M3.500 3V1.500h6v5H7.500M1.500 4.500h5v4h-5zM1 4h6" fill="none" stroke="currentColor" stroke-width="1.300"/></svg></button>
            <button aria-label="关闭"><svg width="10" height="10"><path d="m1 1 7 7M8 1 1 8" stroke="currentColor" stroke-width="1.500"/></svg></button>
          </div>
        </nav>
        <div class="bars">
          <div class="panel"><span class="vgrip"></span>${FILE_TOOLS.map(tool)}</div>
          <div class="panel layerbar"><span class="vgrip"></span>
            <div class="combo c131">${icon("bulb")}${icon("sun")}${icon("lock")}${icon("printB")}<i class="sw near"></i>
              <select aria-label="图层"><option>粗实线层</option></select>${car}</div>
            ${tool(["layers", "图层设置"])}
            <div class="combo c86"><i class="sw"></i><select aria-label="颜色"><option>ByLayer</option></select>${car}</div>
            ${tool(["wheel", "颜色设置"])}
            <div class="combo c106"><i class="red"></i><select aria-label="线型"><option>ByLayer</option></select>${car}</div>
            ${tool(["ltype", "线型设置"])}
            <div class="combo c106"><i class="thick"></i><select aria-label="线宽"><option>ByLayer</option></select>${car}</div>
            ${tool(["lweight", "线宽设置"])}
          </div>
          <div class="panel"><span class="vgrip"></span>${STYLE_TOOLS.map(tool)}</div>
        </div>
        <div class="work">
          <div class="rails"><tool-rail .items=${DRAW}></tool-rail><tool-rail .items=${ANNOT}></tool-rail></div>
          <div class="dock">
            <button><span class="strip"></span><span class="lab">${icon("lib")}<span class="vt">图库</span></span></button>
            <button><span class="strip"></span><span class="lab">${icon("sheet")}<span class="vt">特性</span></span></button>
          </div>
          <div class="center">
            <div class="tabs">
              <div class="tab"><svg class="shape" viewBox="0 0 140 20"><path d="M.5 20 19 2.500Q21 .5 24 .5H139.500V20" fill="#fff" stroke="#a8a8a8"/></svg>
                <span>工程图文档1*</span>
                <button aria-label="关闭文档"><svg width="9" height="9"><path d="m1 1 7 7M8 1 1 8" stroke="#666" stroke-width="1.300"/></svg></button></div>
              <button class="list" aria-label="文档列表"><svg width="9" height="5"><path d="M0 0h9L4.500 5z" fill="currentColor"/></svg></button>
            </div>
            <cad-drawing></cad-drawing>
            <div class="sheets">
              ${[["首页", "M1.500 1v7M7 1 3.500 4.500 7 8z"], ["上一页", "M6 1 2.500 4.500 6 8z"], ["下一页", "M3 1l3.500 3.500L3 8z"], ["末页", "M7.500 1v7M2 1l3.500 3.500L2 8z"]].map(
                ([n, d]) => html`<button class="nav" aria-label=${n}><svg width="12" height="9"><path d=${d} fill="currentColor" stroke="currentColor" stroke-width=".8"/></svg></button>`)}
              <button class="sheet"><svg width="47" height="16"><path d="M0 0h47q-3 1-4 4l-4 10q-1 1.500-3 1.500H11q-2 0-3-1.500L4 4Q3 1 0 0z" fill="#fff" stroke="#999"/></svg><span>模型</span></button>
            </div>
          </div>
          <div class="rails right"><tool-rail .items=${MODIFY}></tool-rail><tool-rail .items=${CORNER}></tool-rail></div>
        </div>
        <footer class="status"><span class="cmd">命令:</span><span class="w101">空命令</span>
          <span class="w188">X:-907.879, Y:-829.941</span><span class="w92">屏幕点</span>
          <button>正交</button><button class="on">线宽</button><button>动态输入</button>
          <button class="nv">导航<svg width="6" height="4"><path d="M0 0h6L3 4z" fill="#555"/></svg></button>
          <svg width="12" height="12"><path d="M8 1h2M8 5h2M8 9h2M4 5h2M4 9h2M0 9h2" stroke="#bbb" stroke-width="2"/></svg>
        </footer>
      </div>
      <div class="float"><div class="head"><span>立</span><svg width="9" height="9"><path d="m1 1 7 7M8 1 1 8" stroke="#666" stroke-width="1.400"/></svg></div><div class="body"></div></div>
      <footer class="taskbar">
        <button class="start" aria-label="开始"><svg width="38" height="38" viewBox="0 0 38 38">
          <defs><radialGradient id="o" cx=".5" cy=".95" r=".9"><stop offset="0" stop-color="#30d4f4"/><stop offset=".45" stop-color="#1a6aa0"/><stop offset="1" stop-color="#1d4468"/></radialGradient></defs>
          <circle cx="19" cy="19" r="18" fill="url(#o)" stroke="#27506e"/><path d="M3 16Q6 3 19 2t16 14q-14-6-32 0z" fill="#fff" opacity=".28"/>
          <path d="M10 9q5-3 9 0l-2 9q-4-3-9 0z" fill="#f0662c"/><path d="M20.500 9.500q5 3 10 0l-2 9q-5 3-10 0z" fill="#8cc63e"/><path d="M7.500 20q5-3 9 0l-2 8q-4-3-9 0z" fill="#3aa0e8"/><path d="M18 20.500q5 3 10 0l-2 8.500q-5 3-10 0z" fill="#fcc82c"/></svg></button>
        <button class="task run" aria-label="浏览器"><svg width="34" height="34" viewBox="-17 -17 34 34">
          ${["#b93df0", "#f8452c", "#fdb80c", "#fde400", "#2fcc4a", "#2fa4f4"].map((c, i) => svg`<path d="M0 0C-9-3-9-13-2-16Q6-18 11-12 3-12 0 0z" fill=${c} transform=${`rotate(${i * 60})`}/>`)}
          <circle r="3" fill="#fff"/></svg></button>
        <button class="task" aria-label="资源管理器"><svg width="32" height="32" viewBox="0 0 32 32">
          <path d="M1 6V3h10l2 2h9l1 2h8v22H1z" fill="#f0d27c" stroke="#b8923c"/><path d="M5 3h4v2H5z" fill="#2aa83a"/><path d="M13 5h3v2h-3z" fill="#d8402c"/><path d="M21 7h5v2h-5z" fill="#3a8ae0"/>
          <path d="M1 9h30v20H1z" fill="#f8e6a4" stroke="#c8a450"/><path d="M5 31V19q0-2 3-2h17q3 0 3 2v12h-5v-7H10v7z" fill="#8ecbea" stroke="#4a98c4"/></svg></button>
        <button class="task run on" aria-label="CAXA">${bigLogo}</button>
        <div class="tray">
          <svg class="ime" width="17" height="18" viewBox="0 0 17 18"><path d="M2 2 15 0q1 0 1.500 2v10q0 2-2 2.500L4 16q-2 0-2.500-2L.5 4q0-2 1.500-2z" fill="#f4511e"/><path d="M12.500 4.500Q5 3 5 6q0 1.500 3.500 1.700 4 .3 4 2.300 0 3-8.500 2" fill="none" stroke="#fff" stroke-width="2"/></svg>
          <svg width="14" height="16" viewBox="1 0 14 16"><path d="M8 .8 14 2.500v6q0 5-6 7-6-2-6-7v-6z" fill="#4cae20" stroke="#e8f4dc" stroke-width="1.500"/><path d="M9.500 3 5 9h2.500L6.500 13 11 7H8.500z" fill="#fff"/></svg>
          <svg width="17" height="17" viewBox="0 0 17 17"><path d="M2 3h7v12H2zM4 1h3v2H4zM9 6h6v3q0 2-3 2v4H9M10.500 3v3M14 3v3" fill="#666" stroke="#333" stroke-width="2.500"/><path d="M2 3h7v12H2zM4 1h3v2H4zM10.500 3v3M14 3v3M12 11v4H9" fill="#888" stroke="#fff" stroke-width="1.200"/><path d="M8.500 6h7.500v3q0 2-3.500 2.500Q9 11 8.500 9z" fill="#fff"/></svg>
          <svg width="16" height="14" viewBox="0 0 16 14"><path d="M.5 11h2v2.500h-2zM3.500 9h2v4.500h-2zM6.500 6.500h2v7h-2zM9.500 4h2v9.500h-2zM12.500 1h2.500v12.500h-2.500z" fill="#fff" stroke="#555" stroke-width=".8"/></svg>
          <svg width="17" height="16" viewBox="0 0 17 16"><path d="M1 5h3l4-4v14l-4-4H1z" fill="#eee" stroke="#444"/><path d="M10 5q2 3 0 6M12 3q4 5 0 10M14 1.500q5 6 0 13" fill="none" stroke="#fff" stroke-width="1.200"/></svg>
        </div>
        <div class="clock">下午 7:20<br>2019/7/29 星期一</div>
        <button class="desk" aria-label="显示桌面"></button>
      </footer>`;
  }
}
